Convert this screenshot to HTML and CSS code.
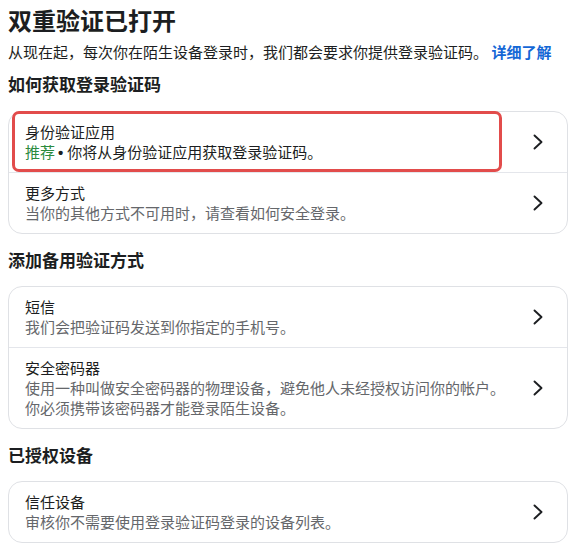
FILE: index.html
```html
<!DOCTYPE html>
<html lang="zh-CN">
<head>
<meta charset="utf-8">
<title>双重验证已打开</title>
<link rel="stylesheet" href="styles.css">
</head>
<body>
<main class="page">
  <h1 class="title">双重验证已打开</h1>
  <p class="intro">从现在起，每次你在陌生设备登录时，我们都会要求你提供登录验证码。 <a class="link" href="#">详细了解</a></p>

  <h2 class="section">如何获取登录验证码</h2>
  <div class="card">
    <div class="row row-highlight">
      <div class="row-text">
        <div class="row-title">身份验证应用</div>
        <div class="row-sub"><span class="rec">推荐</span><span class="dot">•</span>你将从身份验证应用获取登录验证码。</div>
      </div>
      <svg class="chev" viewBox="0 0 12 16" width="12" height="16"><polyline points="2.5,1.5 9.5,8 2.5,14.5"/></svg>
      <span class="mark"></span>
    </div>
    <div class="row">
      <div class="row-text">
        <div class="row-title">更多方式</div>
        <div class="row-sub">当你的其他方式不可用时，请查看如何安全登录。</div>
      </div>
      <svg class="chev" viewBox="0 0 12 16" width="12" height="16"><polyline points="2.5,1.5 9.5,8 2.5,14.5"/></svg>
    </div>
  </div>

  <h2 class="section">添加备用验证方式</h2>
  <div class="card">
    <div class="row">
      <div class="row-text">
        <div class="row-title">短信</div>
        <div class="row-sub">我们会把验证码发送到你指定的手机号。</div>
      </div>
      <svg class="chev" viewBox="0 0 12 16" width="12" height="16"><polyline points="2.5,1.5 9.5,8 2.5,14.5"/></svg>
    </div>
    <div class="row">
      <div class="row-text">
        <div class="row-title">安全密码器</div>
        <div class="row-sub">使用一种叫做安全密码器的物理设备，避免他人未经授权访问你的帐户。<br>你必须携带该密码器才能登录陌生设备。</div>
      </div>
      <svg class="chev" viewBox="0 0 12 16" width="12" height="16"><polyline points="2.5,1.5 9.5,8 2.5,14.5"/></svg>
    </div>
  </div>

  <h2 class="section">已授权设备</h2>
  <div class="card">
    <div class="row">
      <div class="row-text">
        <div class="row-title">信任设备</div>
        <div class="row-sub">审核你不需要使用登录验证码登录的设备列表。</div>
      </div>
      <svg class="chev" viewBox="0 0 12 16" width="12" height="16"><polyline points="2.5,1.5 9.5,8 2.5,14.5"/></svg>
    </div>
  </div>
</main>
</body>
</html>
```

FILE: styles.css
```css
* { box-sizing: border-box; }

html, body {
  margin: 0;
  padding: 0;
  background: #ffffff;
}

body {
  font-family: "Noto Sans CJK SC", "Noto Sans", sans-serif;
  color: #1c1e21;
}

.page {
  width: 560px;
  margin-left: 8px;
  padding-top: 4px;
}

.title {
  margin: 0;
  font-size: 24px;
  line-height: 32px;
  font-weight: 700;
  color: #1c1e21;
}

.intro {
  margin: 5px 0 0;
  font-size: 15px;
  line-height: 22px;
  color: #1c1e21;
  white-space: nowrap;
}

.link {
  color: #1467d6;
  font-weight: 700;
  text-decoration: none;
}

.section {
  margin: 14px 0 14px;
  font-size: 17px;
  line-height: 24px;
  font-weight: 700;
  color: #1c1e21;
}

.intro + .section {
  margin-top: 9px;
  margin-bottom: 15px;
}

.card {
  border: 1px solid #dfe1e5;
  border-radius: 14px;
  background: #fff;
}

.row {
  position: relative;
  display: flex;
  align-items: center;
  padding: 9px 23px 10px 16px;
}

.row + .row {
  border-top: 1px solid #e4e6eb;
}

.row-text {
  flex: 1;
  min-width: 0;
}

.row-title {
  font-size: 15px;
  line-height: 21px;
  color: #1c1e21;
}

.row-sub {
  font-size: 15px;
  line-height: 20px;
  color: #65676b;
  white-space: nowrap;
}

.row-highlight .row-sub {
  color: #1c1e21;
}

.rec {
  color: #2b8a3e;
}

.dot {
  font-family: "Liberation Sans", sans-serif;
  font-weight: 700;
  line-height: 0;
  margin: 0 4px 0 3px;
}

.chev {
  flex: none;
  margin-left: 12px;
}

.chev polyline {
  fill: none;
  stroke: #1c1e21;
  stroke-width: 1.9;
  stroke-linecap: round;
  stroke-linejoin: round;
}

.mark {
  position: absolute;
  left: 3px;
  top: -1px;
  width: 490px;
  height: 61px;
  border: 3px solid #e24c4b;
  border-radius: 7px;
  pointer-events: none;
}
```
